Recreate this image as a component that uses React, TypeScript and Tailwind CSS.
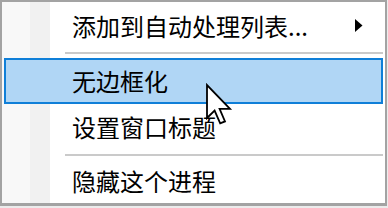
import React from 'react'

const font = { fontFamily: '"Noto Sans CJK SC", "Noto Sans", sans-serif' }

const Separator: React.FC<{ top: string }> = ({ top }) => (
  <div className={`h-[9px] ${top}`}>
    <div className="ml-[63px] mr-[2px] h-[2px] bg-[#cacaca]" />
  </div>
)

const SubmenuArrow = () => (
  <svg width="8" height="13" viewBox="0 0 8 13" className="ml-auto mr-[22px]">
    <path d="M0 0 L7.5 6.5 L0 13 Z" fill="#000" />
  </svg>
)

const Cursor = () => (
  <svg
    width="28"
    height="44"
    viewBox="0 0 14 22"
    className="absolute left-[205px] top-[83px]"
  >
    <path
      d="M1 1 L1 17.5 L4.8 13.8 L7.6 20.2 L10 19.2 L7.3 12.9 L12.5 12.9 Z"
      fill="#fff"
      stroke="#000"
      strokeWidth="0.9"
      strokeLinejoin="miter"
    />
  </svg>
)

export default function App() {
  return (
    <div className="relative w-[388px] h-[208px] overflow-hidden bg-[#ececec]" style={font}>
      <div className="w-[387px] h-[206px] border-t-2 border-l-2 border-r-2 border-b-[3px] border-[#a3a3a3] bg-[linear-gradient(to_right,#f8f8f8_0px,#f8f8f8_28px,#f1f1f1_28px,#f1f1f1_48px,#ffffff_48px)] flex flex-col text-[24px] leading-none text-black">
        <div className="h-[47px] flex items-center pl-[70px]">
          <span>添加到自动处理列表...</span>
          <SubmenuArrow />
        </div>
        <Separator top="pt-[3px]" />
        <div className="h-[46px] mx-[2px] border-2 border-[#0f7fd8] bg-[#b0d6f5] flex items-center pl-[66px]">
          <span>无边框化</span>
        </div>
        <div className="h-[46px] flex items-center pl-[70px]">
          <span>设置窗口标题</span>
        </div>
        <Separator top="pt-[4px]" />
        <div className="h-[44px] flex items-center pl-[70px]">
          <span>隐藏这个进程</span>
        </div>
      </div>
      <Cursor />
    </div>
  )
}
